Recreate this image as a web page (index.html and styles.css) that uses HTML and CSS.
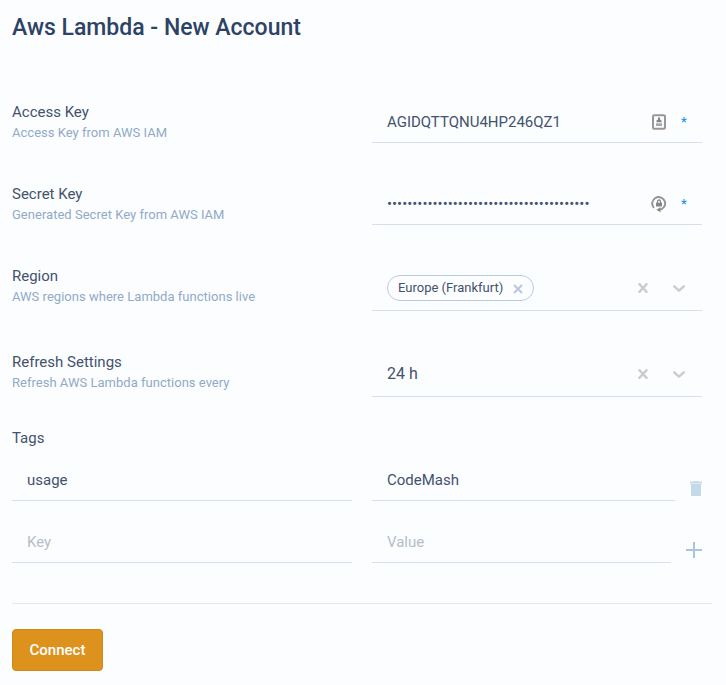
FILE: index.html
```html
<!DOCTYPE html>
<html lang="en">
<head>
<meta charset="utf-8">
<title>Aws Lambda - New Account</title>
<link rel="stylesheet" href="styles.css">
</head>
<body>
<form class="account-form">
  <h1 class="title">Aws Lambda - New Account</h1>

  <div class="row">
    <div class="info"><div class="label">Access Key</div><div class="hint">Access Key from AWS IAM</div></div>
    <div class="field">
      <span class="value">AGIDQTTQNU4HP246QZ1</span>
      <svg class="key-icon" width="16" height="18" viewBox="0 0 16 18"><rect x="2" y="2.300" width="12" height="13.400" rx="1.200" fill="none" stroke="#979797" stroke-width="2"/><path d="M7 4.500h2v2l1.500 1v1.700h-5V7.500l1.500-1z" fill="#858585"/><path d="M5 10.300h6v2.700H5z" fill="#a9a9a9"/></svg>
      <span class="required">*</span>
    </div>
  </div>

  <div class="row">
    <div class="info"><div class="label">Secret Key</div><div class="hint">Generated Secret Key from AWS IAM</div></div>
    <div class="field">
      <span class="value secret">••••••••••••••••••••••••••••••••••••••••</span>
      <svg class="key-icon" width="16" height="18" viewBox="0 0 16 18"><path d="M3 12.800A6.500 6.300 0 1 1 8 14.700" fill="none" stroke="#929292" stroke-width="1.900"/><path d="M9.500 12.300v5L5.300 14.800z" fill="#8a8a8a"/><path d="M5 7.700h6v3.800H5z" fill="#858585"/><path d="M6.500 8V6.500a1.500 1.500 0 0 1 3 0V8" fill="none" stroke="#8b8b8b" stroke-width="1.300"/></svg>
      <span class="required">*</span>
    </div>
  </div>

  <div class="row">
    <div class="info"><div class="label">Region</div><div class="hint">AWS regions where Lambda functions live</div></div>
    <div class="field select">
      <span class="chip">Europe (Frankfurt)<svg class="chip-x" width="10" height="10" viewBox="0 0 10 10"><path d="M1 1l8 8M9 1L1 9"/></svg></span>
      <svg class="clear" width="12" height="12" viewBox="0 0 12 12"><path d="M2.400 2.200l7.200 7.600M9.600 2.200l-7.200 7.600"/></svg>
      <svg class="arrow" width="14" height="10" viewBox="0 0 14 10"><path d="M2.200 3.300L7 7.700l4.800-4.400"/></svg>
    </div>
  </div>

  <div class="row">
    <div class="info"><div class="label">Refresh Settings</div><div class="hint">Refresh AWS Lambda functions every</div></div>
    <div class="field select">
      <span class="value large">24 h</span>
      <svg class="clear" width="12" height="12" viewBox="0 0 12 12"><path d="M2.400 2.200l7.200 7.600M9.600 2.200l-7.200 7.600"/></svg>
      <svg class="arrow" width="14" height="10" viewBox="0 0 14 10"><path d="M2.200 3.300L7 7.700l4.800-4.400"/></svg>
    </div>
  </div>

  <div class="tags">
    <div class="label">Tags</div>
    <div class="tag-row">
      <div class="field">usage</div>
      <div class="field">CodeMash</div>
      <svg class="trash" width="12" height="16" viewBox="0 0 12 16"><path d="M0 .5h12V2H0z" fill="#dde8f2"/><path d="M3.500 0h5v1h-5z" fill="#c5d9e8"/><path d="M0 1h12v1.200H0z" fill="#c5d9e8"/><path d="M0 2.200h12V4H0z" fill="#dde8f2"/><path d="M1 3h10v11q0 1-1 1H2q-1 0-1-1z" fill="#c5d9e8"/></svg>
    </div>
    <div class="tag-row new-tag">
      <div class="field placeholder">Key</div>
      <div class="field placeholder">Value</div>
      <svg class="plus" width="16" height="16" viewBox="0 0 16 16"><path d="M8 0v16M0 8h16" stroke="#a9c5e0" stroke-width="2"/></svg>
    </div>
  </div>

  <div class="footer"><button class="connect" type="button">Connect</button></div>
</form>
</body>
</html>
```
FILE: styles.css
```css
* { box-sizing: border-box; }

body {
  margin: 0;
  background: #fcfdff;
  color: #43536d;
  font: 15px/20px Roboto, "Liberation Sans", sans-serif;
}

.account-form { padding: 13px 14px 0 12px; }

.title {
  margin: 0 0 58px;
  color: #2d4365;
  font-size: 23px;
  font-weight: 500;
  line-height: 30px;
}

.row {
  display: grid;
  grid-template-columns: 340px 330px;
  gap: 20px;
  margin-bottom: 40px;
}

.info { height: 42px; }
.label { line-height: 22px; }
.hint { color: #91aac7; font-size: 13px; letter-spacing: 0.02px; }

.field {
  display: flex;
  align-items: center;
  height: 42px;
  padding: 0 15px;
  border-bottom: 1px solid #d6dfed;
}

.select { height: 46px; }
.value { flex: 1; }
.large { font-size: 16px; }
.key-icon { margin-right: 14px; }
.required {
  width: 6px;
  color: #2196f3;
  font-size: 13px;
  font-weight: 500;
  text-align: center;
}

.chip {
  display: flex;
  align-items: center;
  height: 26px;
  margin-right: auto;
  padding: 0 10px;
  border: 1px solid #b9cce1;
  border-radius: 13px;
  font-size: 13px;
}

.chip-x { margin: 3px 0 0 10px; fill: none; stroke: #b5c8df; stroke-width: 2; }
.clear { margin-right: 23px; fill: none; stroke: #ccc; stroke-width: 2.4; stroke-linecap: round; }
.arrow { margin-right: 1px; fill: none; stroke: #ccc; stroke-width: 2.4; stroke-linecap: round; stroke-linejoin: round; }

.tags { margin-top: -10px; }
.tags .label { margin-bottom: 10px; }

.tag-row {
  display: grid;
  grid-template-columns: 340px 303px 12px;
  column-gap: 20px;
  margin-bottom: 20px;
}

.tag-row .trash { margin: 22px 0 0 -5px; }
.new-tag { grid-template-columns: 340px 299px 16px; margin-bottom: 40px; }
.new-tag .plus { margin: 21px 0 0 -5px; }
.placeholder { color: #b5bdca; }

.footer {
  border-top: 1px solid #e2e8ee;
  padding-top: 25px;
}

.connect {
  width: 91px;
  height: 42px;
  padding: 0;
  border: 1px solid #d0871b;
  border-radius: 4px;
  background: #de921e;
  color: #fff;
  font: 500 15px/20px Roboto, "Liberation Sans", sans-serif;
}
```
